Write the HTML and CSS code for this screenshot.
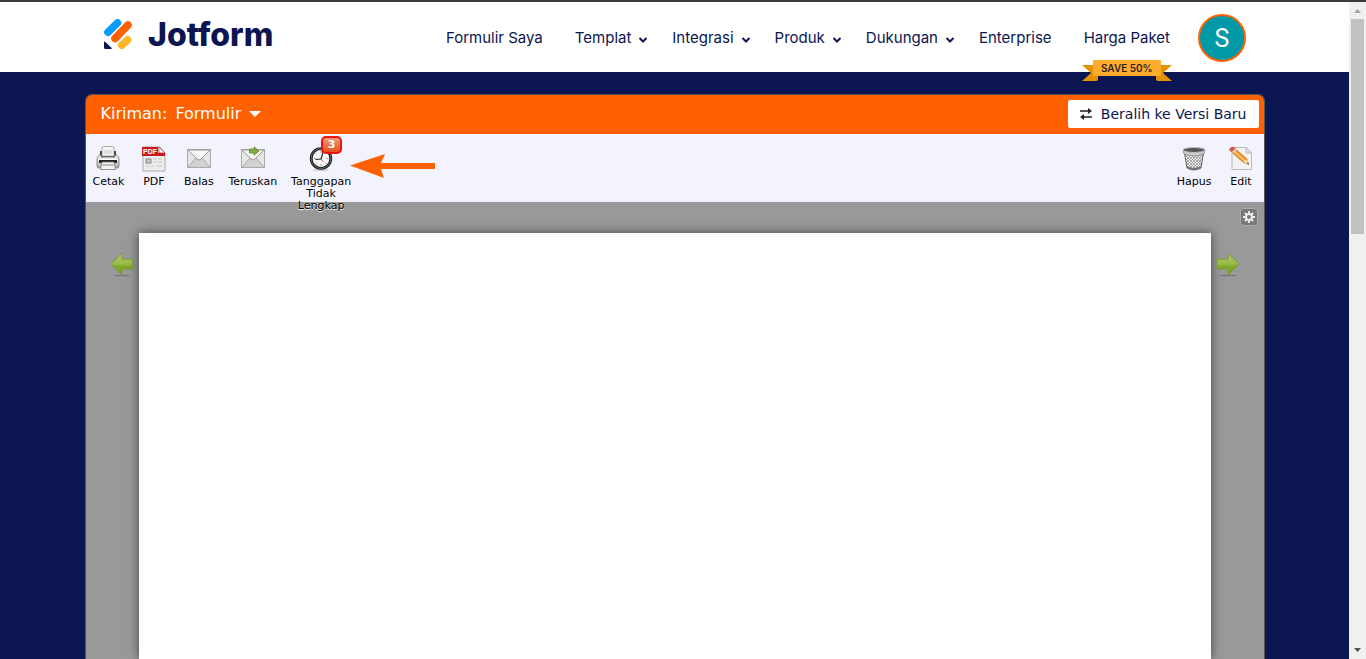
FILE: index.html
```
<!DOCTYPE html>
<html lang="id">
  <head>
    <meta charset="UTF-8" />
    <meta name="viewport" content="width=device-width, initial-scale=1.0" />
    <title>Jotform - Kiriman</title>
    <link rel="stylesheet" href="styles.css" />
  </head>

  <body>
    <div class="page">
      <header class="header">
        <div class="header-inner">
          <a href="#" class="logo">
            <svg width="30" height="32" viewBox="0 0 30 32">
              <path d="M4 13.200L13.500 3.900" stroke="#0a9bff" stroke-width="7.600" stroke-linecap="round" />
              <path d="M11 19.500L24 6" stroke="#ff6100" stroke-width="7.600" stroke-linecap="round" />
              <path d="M17.800 26.300L23.500 20.900" stroke="#ffb629" stroke-width="7.600" stroke-linecap="round" />
              <path d="M0 23.500q0-1.800 1.400-.6l6 5.800q1 1.300-.4 1.300H1.500Q0 30 0 28.500z" fill="#0a1551" />
            </svg>
            <span>Jotform</span>
          </a>
          <nav>
            <ul class="nav-list">
              <li><a href="#">Formulir Saya</a></li>
              <li class="has-menu">
                <a href="#">Templat<svg class="chevron" viewBox="0 0 10 8"><path d="M1.500 2L5 5.500L8.500 2" /></svg></a>
              </li>
              <li class="has-menu">
                <a href="#">Integrasi<svg class="chevron" viewBox="0 0 10 8"><path d="M1.500 2L5 5.500L8.500 2" /></svg></a>
              </li>
              <li class="has-menu">
                <a href="#">Produk<svg class="chevron" viewBox="0 0 10 8"><path d="M1.500 2L5 5.500L8.500 2" /></svg></a>
              </li>
              <li class="has-menu">
                <a href="#">Dukungan<svg class="chevron" viewBox="0 0 10 8"><path d="M1.500 2L5 5.500L8.500 2" /></svg></a>
              </li>
              <li><a href="#">Enterprise</a></li>
              <li class="pricing">
                <a href="#">Harga Paket</a>
                <div class="ribbon">
                  <svg width="90" height="22" viewBox="0 0 90 22">
                    <path d="M0 5H16V19Q16 21 13 21H0L9 13z" fill="#e59100" />
                    <path d="M90 5H74V19Q74 21 77 21H90L81 13z" fill="#e59100" />
                    <rect x="11" width="68" height="16" rx="1" fill="#ffab2d" />
                  </svg>
                  <span>SAVE 50%</span>
                </div>
              </li>
            </ul>
          </nav>
          <a href="#" class="avatar">S</a>
        </div>
      </header>

      <main class="panel">
        <div class="title-bar">
          <button class="form-title">
            <span>Kiriman:</span>
            <span>Formulir</span>
            <svg width="12" height="6" viewBox="0 0 12 6"><path d="M0 0H12L6 6z" fill="#fff" /></svg>
          </button>
          <button class="switch-button">
            <svg width="12" height="12" viewBox="0 0 12 12">
              <path d="M0 3H9M3 9H12" stroke="#222" stroke-width="1.500" />
              <path d="M8 0L12 3L8 6zM4 6L0 9L4 12z" fill="#222" />
            </svg>
            Beralih ke Versi Baru
          </button>
        </div>

        <div class="toolbar">
          <button class="tool">
            <svg viewBox="0 0 24 26">
              <defs>
                <linearGradient id="silver" x2="0" y2="1">
                  <stop offset="0" stop-color="#fafafa" />
                  <stop offset="1" stop-color="#aaa" />
                </linearGradient>
              </defs>
              <path d="M4 5H20V12H4z" fill="#333" />
              <path d="M6 2Q6 .5 7.500 .5H16.500Q18 .5 18 2V10H6z" fill="#f4f4f4" stroke="#999" stroke-width=".8" />
              <path d="M7.500 5H16.500M7.500 7H16.500" stroke="#ccc" />
              <path d="M3 9H5V11H19V9H21L23 12V20Q23 22 21 22H3Q1 22 1 20V12z" fill="url(#silver)" stroke="#777" stroke-width=".8" />
              <path d="M2 13.500H22" stroke="#fff" />
              <rect x="3" y="14" width="18" height="3" rx="1" fill="#222" />
              <path d="M6 16H18L19.500 23.500H4.500z" fill="#f2f2f2" stroke="#777" stroke-width=".8" />
              <path d="M6.500 18H17.500L18 20H6z" fill="#bbb" />
            </svg>
            Cetak
          </button>
          <button class="tool">
            <svg viewBox="0 0 24 26">
              <path d="M1 1H18L23 7V25H1z" fill="#eeeeec" stroke="#aaa" />
              <path d="M0 1H16V7H23V10H0z" fill="#c9191e" />
              <path d="M17 1L23 7H17z" fill="#fff" stroke="#c9191e" stroke-width=".7" />
              <text x="1" y="8" class="pdf-label">PDF</text>
              <rect x="4" y="13" width="5" height="4" fill="#ccc" stroke="#888" />
              <path d="M11 13H15M16 13H20M11 16H14M15 16H20M4 20H8M9 20H12M14 20H20" stroke="#c4c4c4" />
            </svg>
            PDF
          </button>
          <button class="tool">
            <svg viewBox="0 0 24 26">
              <rect x="0.500" y="3.500" width="23" height="18" fill="#e6e6e4" stroke="#aaa" />
              <path d="M1 21L9 12H15L23 21z" fill="#d2d2d0" />
              <path d="M1 21L9 12M15 12L23 21" stroke="#aaa" />
              <path d="M1 4L10 13Q12 15 14 13L23 4z" fill="#f6f6f5" stroke="#999" />
            </svg>
            Balas
          </button>
          <button class="tool">
            <svg viewBox="0 0 24 26">
              <rect x="0.500" y="3.500" width="23" height="18" fill="#e6e6e4" stroke="#aaa" />
              <path d="M1 21L9 12H15L23 21z" fill="#d2d2d0" />
              <path d="M1 21L9 12M15 12L23 21" stroke="#aaa" />
              <path d="M1 4L10 13Q12 15 14 13L23 4z" fill="#f6f6f5" stroke="#999" />
              <path d="M8.500 3H13V.800L18 5L13 9.200V7H8.500z" fill="#82a943" stroke="#648a2c" stroke-width=".8" />
            </svg>
            Teruskan
          </button>
          <button class="tool incomplete">
            <svg viewBox="0 0 24 26">
              <ellipse cx="12" cy="24" rx="8" ry="1" fill="#ccc" />
              <circle cx="12" cy="12.500" r="9.800" fill="#fafafa" stroke="#1c1c1c" stroke-width="2.800" />
              <circle cx="12" cy="12.500" r="9.900" stroke="#888" stroke-width=".7" />
              <path d="M12 5V7M12 18V20M4.500 12.500H6.500M17.500 12.500H19.500M6.700 7.200L7.500 8M6.700 17.800L7.500 17M16.500 17L17.300 17.800" stroke="#777" stroke-width=".8" />
              <path d="M14 6.500L12 13L6.500 13.500" stroke="#222" stroke-width="1.200" />
              <path d="M12 13L14.500 16" stroke="#c33" stroke-width=".8" />
            </svg>
            Tanggapan Tidak Lengkap
            <span class="badge">3</span>
          </button>
          <svg class="pointer-arrow" viewBox="0 0 86 24">
            <path d="M0 11.500L35 0L31 9H85V15H31L34 24z" fill="#ff6100" />
          </svg>
          <button class="tool push-right">
            <svg viewBox="0 0 24 26">
              <defs>
                <pattern id="mesh" width="3" height="3" patternUnits="userSpaceOnUse">
                  <rect width="3" height="3" fill="#f0f0f0" />
                  <path d="M0 0L3 3M3 0L0 3" stroke="#888" stroke-width=".7" />
                </pattern>
              </defs>
              <path d="M2 4L5 22Q12 26 19 22L22 4z" fill="url(#mesh)" stroke="#666" />
              <path d="M5 20Q12 24 19 20V22Q12 26 5 22z" fill="#777" />
              <path d="M1 4L2 8Q12 12 22 8L23 4z" fill="#ccc" stroke="#777" stroke-width=".7" />
              <ellipse cx="12" cy="4" rx="11" ry="2.500" fill="#555" stroke="#bbb" stroke-width="1.200" />
            </svg>
            Hapus
          </button>
          <button class="tool">
            <svg viewBox="0 0 24 26">
              <path d="M3 1.500H17L22.500 7V23.500H3z" fill="#f3f3f3" stroke="#bbb" />
              <path d="M17 1.500V7H22.500z" fill="#ddd" stroke="#bbb" />
              <path d="M3 6.500L6.500 3L18 13L19.500 18.500L14.500 16.500z" fill="#f79a28" stroke="#b8661b" stroke-width=".7" />
              <path d="M5 5L16 15" stroke="#ffd27c" stroke-width="1.500" />
              <path d="M14.500 16.500L18 13L19.500 18.500z" fill="#f5dcae" />
              <path d="M18 17L19 16.500L20 19z" fill="#333" />
              <path d="M3.500 6.500L7 3L5 1Q3 0 1 2Q-.5 3.500 1 5z" fill="#d7564f" />
              <path d="M3.500 6.500L7 3" stroke="#ddd" stroke-width="1.500" />
            </svg>
            Edit
          </button>
        </div>

        <div class="viewer">
          <button class="settings" aria-label="Pengaturan">
            <svg width="14" height="14" viewBox="0 0 14 14">
              <path d="M7 1V13M1 7H13M2.800 2.800L11.200 11.200M11.200 2.800L2.800 11.200" stroke="#eee" stroke-width="1.800" />
              <circle cx="7" cy="7" r="3" fill="#777" stroke="#eee" stroke-width="2" />
            </svg>
          </button>
          <div class="viewer-row">
            <button class="page-button previous" aria-label="Sebelumnya">
              <svg width="24" height="26" viewBox="0 0 24 26">
                <defs>
                  <linearGradient id="leaf" x2="0" y2="1">
                    <stop offset="0" stop-color="#a9c46c" />
                    <stop offset=".5" stop-color="#9abb4b" />
                    <stop offset=".6" stop-color="#84a92a" />
                    <stop offset="1" stop-color="#75a01c" />
                  </linearGradient>
                </defs>
                <ellipse cx="12" cy="24.500" rx="9" ry=".8" fill="#777" />
                <path d="M1 13L12 2V8H23V18H12V24z" fill="url(#leaf)" stroke="#779b35" />
              </svg>
            </button>
            <article class="sheet"></article>
            <button class="page-button next" aria-label="Berikutnya">
              <svg width="24" height="26" viewBox="0 0 24 26">
                <ellipse cx="12" cy="24.500" rx="9" ry=".8" fill="#777" />
                <path d="M23 13L12 2V8H1V18H12V24z" fill="url(#leaf)" stroke="#779b35" />
              </svg>
            </button>
          </div>
        </div>
      </main>
    </div>

    <div class="scrollbar">
      <svg width="17" height="17" viewBox="0 0 17 17"><path d="M5 11L8.500 7L12 11z" fill="#a3a3a3" /></svg>
      <div class="scrollbar-thumb"></div>
      <svg class="scroll-down" width="17" height="17" viewBox="0 0 17 17"><path d="M5 6L8.500 10L12 6z" fill="#505050" /></svg>
    </div>
  </body>
</html>
```
FILE: styles.css
```
* {
  box-sizing: border-box;
  margin: 0;
  padding: 0;
}

body {
  display: flex;
  height: 100vh;
  overflow: hidden;
  border-top: 2px solid #3c3a3b;
  background-color: #0a1551;
  font-family: "DejaVu Sans", Verdana, sans-serif;
}

a {
  color: inherit;
  text-decoration: none;
}

button {
  border: none;
  background: none;
  color: inherit;
  font-family: inherit;
  cursor: pointer;
}

svg {
  display: block;
  flex: none;
  fill: none;
}

.page {
  flex: 1;
  display: flex;
  flex-direction: column;
  min-width: 0;
}

/* Header */
.header {
  height: 70px;
  padding-top: 2px;
  background-color: #fff;
  color: #0a1551;
  font-family: Inter, sans-serif;
}

.header-inner {
  display: flex;
  align-items: center;
  max-width: 1143px;
  height: 100%;
  margin: 0 auto;
  padding-left: 1px;
}

.logo {
  display: flex;
  align-items: center;
  gap: 14px;
  margin-right: auto;
  padding-bottom: 6px;
  font-size: 32px;
  font-weight: 800;
  line-height: 40px;
}

.nav-list {
  display: flex;
  gap: 32px;
  margin-right: 28px;
  list-style-type: none;
  font-size: 15px;
  line-height: 20px;
}

.nav-list a {
  display: flex;
  align-items: center;
}

.has-menu {
  margin-right: -8px;
}

.chevron {
  width: 10px;
  height: 8px;
  margin: 3px 0 0 7px;
  stroke: #0a1551;
  stroke-width: 2;
}

.pricing {
  position: relative;
}

/* Hangs over the lower edge of the header */
.ribbon {
  position: absolute;
  top: 32px;
  left: 50%;
  width: 90px;
  margin-left: -45px;
}

.ribbon span {
  position: absolute;
  top: 0;
  left: 0;
  width: 100%;
  color: #2c2416;
  font-size: 10px;
  font-weight: 600;
  line-height: 17px;
  text-align: center;
}

.avatar {
  width: 48px;
  height: 48px;
  border: 2px solid #ff6100;
  border-radius: 50%;
  background-color: #0099a8;
  color: #fff;
  font-family: Roboto, sans-serif;
  font-size: 25px;
  line-height: 46px;
  text-align: center;
}

/* Submissions panel */
.panel {
  flex: 1;
  display: flex;
  flex-direction: column;
  width: calc(100% - 32px);
  max-width: 1180px;
  margin: 22px auto 0;
  border: 1px solid #555;
  border-bottom: none;
  border-radius: 7px 7px 0 0;
}

.title-bar {
  display: flex;
  align-items: center;
  justify-content: space-between;
  height: 39px;
  padding: 0 5px 1px 15px;
  border-radius: 6px 6px 0 0;
  background-color: #ff6100;
}

.form-title {
  display: flex;
  align-items: center;
  gap: 8px;
  color: #fff;
  font-size: 16px;
  line-height: 20px;
}

.switch-button {
  display: flex;
  align-items: center;
  gap: 9px;
  height: 28px;
  padding: 0 12px;
  border-radius: 2px;
  background-color: #fff;
  color: #0a1551;
  font-size: 14px;
}

.toolbar {
  display: flex;
  align-items: flex-start;
  height: 68px;
  background-color: #f3f3fe;
}

.tool {
  position: relative;
  display: flex;
  flex-direction: column;
  align-items: center;
  min-width: 45px;
  padding: 12px 7px 0;
  color: #000;
  font-size: 11px;
  line-height: 12px;
}

.tool svg {
  width: 24px;
  height: 26px;
  margin-bottom: 4px;
}

.incomplete {
  width: 74px;
  text-shadow: 0 1px 1px #fff;
}

.push-right {
  margin-left: auto;
}

.pdf-label {
  fill: #fff;
  font-family: "Liberation Sans", Arial, sans-serif;
  font-size: 7px;
  font-weight: 700;
}

.badge {
  position: absolute;
  top: 2px;
  left: 37px;
  width: 21px;
  height: 18px;
  border: 2px solid #f01010;
  border-radius: 5px;
  background: linear-gradient(#f59a76, #e4501c);
  color: #fff;
  font-size: 11px;
  font-weight: 700;
  line-height: 14px;
  text-shadow: none;
}

.pointer-arrow {
  width: 86px;
  height: 24px;
  margin: 20px 0 0 -8px;
}

.viewer {
  flex: 1;
  display: flex;
  flex-direction: column;
  background-color: #999;
}

.settings {
  align-self: flex-end;
  display: flex;
  align-items: center;
  justify-content: center;
  width: 18px;
  height: 18px;
  margin: 6px 6px 7px 0;
  border: 1px solid #aaa;
  border-radius: 4px;
  background-color: #777;
}

.viewer-row {
  flex: 1;
  display: flex;
  align-items: flex-start;
}

.page-button {
  display: flex;
  width: 53px;
  padding-top: 18px;
}

.previous {
  justify-content: flex-end;
  padding-right: 5px;
}

.next {
  padding-left: 5px;
}

.sheet {
  flex: 1;
  align-self: stretch;
  background-color: #fff;
  box-shadow: 0 0 10px #444;
}

/* Scrollbar */
.scrollbar {
  display: flex;
  flex-direction: column;
  width: 17px;
  background-color: #f0f0f0;
}

.scrollbar-thumb {
  height: 215px;
  margin: 0 2px;
  background-color: #c1c1c1;
}

.scroll-down {
  margin-top: auto;
}
```
